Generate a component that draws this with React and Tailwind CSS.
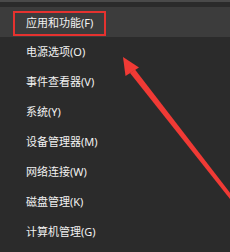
export default function App() {
  const items = [
    "应用和功能(F)",
    "电源选项(O)",
    "事件查看器(V)",
    "系统(Y)",
    "设备管理器(M)",
    "网络连接(W)",
    "磁盘管理(K)",
    "计算机管理(G)",
  ];
  return (
    <div
      className="relative w-[230px] h-[252px] overflow-hidden bg-[#2b2b2b]"
      style={{ fontFamily: '"Noto Sans", "Noto Sans CJK SC", sans-serif' }}
    >
      <div className="h-[2px] bg-[#4a4a4a]" />
      <div className="h-[5px]" />
      <div className="flex flex-col">
        {items.map((t, i) => (
          <div
            key={t}
            className={
              i === 0
                ? "h-[30px] flex items-center pl-[26px] pt-[2px] bg-[#3c3c3c] text-[11px] text-[#f2f2f2]"
                : "h-[30px] flex items-center pl-[26px] pt-[1px] text-[11px] text-[#f2f2f2]"
            }
          >
            {t}
          </div>
        ))}
      </div>
      <div className="absolute left-[13px] top-[11px] w-[93px] h-[25px] border-2 border-[#e5322f]" />
      <svg className="absolute left-0 top-0" width="230" height="252" viewBox="0 0 230 252">
        <polygon points="123,57 125.5,76 139,67.5" fill="#f03a35" />
        <polygon points="130,73 135,69.5 241,207 238,209" fill="#f03a35" />
      </svg>
    </div>
  );
}
